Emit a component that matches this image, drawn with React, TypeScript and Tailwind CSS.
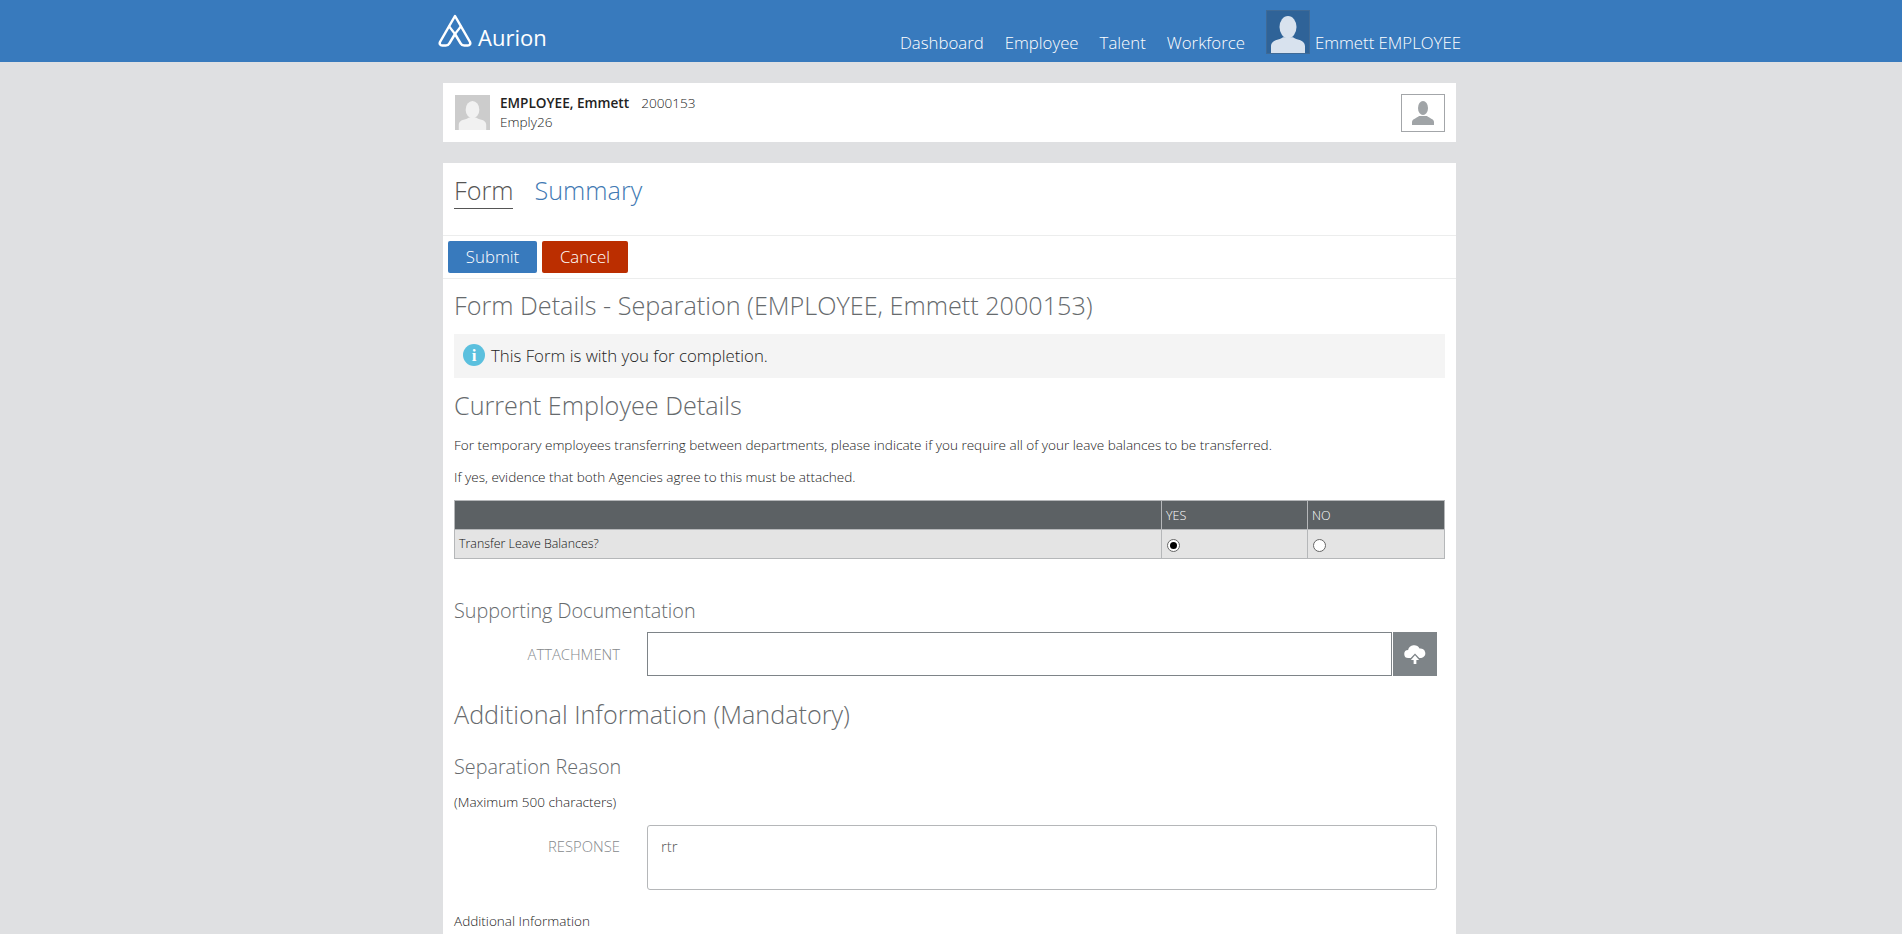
function Silhouette({ className }: { className: string }) {
  return (
    <svg viewBox="0 0 36 40" className={className} fill="currentColor" preserveAspectRatio="none">
      <ellipse cx="18" cy="12" rx="8.500" ry="12" />
      <path d="M1 40v-7c0-5 3-6.500 8-8 2-.6 3-1 4-2h10c1 1 2 1.400 4 2 5 1.500 8 3 8 8v7z" />
    </svg>
  )
}

function Logo() {
  return (
    <div className="flex items-end ml-[-5px]">
      <svg viewBox="0 0 34 33" className="w-[34px] h-[33px]" fill="none" stroke="white" strokeWidth="2.500" strokeLinejoin="round" strokeLinecap="round">
        <path d="M17 2 32 28c.8 1.800-.2 3.600-2.200 3.600h-3.600c-1.600 0-2.800-.8-3.600-2.200L17 20 11.400 29.400c-.8 1.400-2 2.200-3.600 2.200H4.200C2.200 31.600 1.200 29.800 2 28z" />
        <path d="M11.200 12.500 17 20M22.800 12.500 17 20" strokeWidth="2.200" />
      </svg>
      <span className="ml-[6px] mb-[-3px] text-[22px] leading-[26px] text-white font-normal">Aurion</span>
    </div>
  )
}

function FieldLabel({ children }: { children: string }) {
  return <div className="w-[166px] text-right text-[14.800px] font-light text-[#85898c] uppercase">{children}</div>
}

export default function App() {
  return (
    <div className="h-screen overflow-hidden bg-[#dfe0e2] font-['Open_Sans',sans-serif] text-[#222]">
      {/* Top bar */}
      <header className="h-[62px] bg-[#387abd]">
        <div className="w-[1013px] ml-[443px] flex justify-between h-full">
          <div className="pt-[14px]">
            <Logo />
          </div>
          <nav className="flex items-start mr-[-5px] pt-[10px] text-[16.800px] leading-[24px] font-light text-white">
            <a className="mt-[21px] mr-[21px]">Dashboard</a>
            <a className="mt-[21px] mr-[21px]">Employee</a>
            <a className="mt-[21px] mr-[21px]">Talent</a>
            <a className="mt-[21px] mr-[21px]">Workforce</a>
            <div className="w-[44px] h-[44px] bg-[#2f6398] border border-[#3f6a96] flex items-end justify-center">
              <Silhouette className="w-[36px] h-[37px] text-[#d8e2ee]" />
            </div>
            <a className="mt-[21px] ml-[5px]">Emmett EMPLOYEE</a>
          </nav>
        </div>
      </header>

      <main className="w-[1013px] ml-[443px]">
        {/* Employee strip */}
        <section className="mt-[21px] h-[59px] bg-white flex items-center pl-[12px] pr-[11px]">
          <div className="w-[35px] h-[35px] bg-[#cccccc] flex items-end justify-center">
            <Silhouette className="w-[29px] h-[29px] text-[#f1f1f1]" />
          </div>
          <div className="ml-[10px] mt-[-2px] flex-1 text-[13.600px] leading-[19px] font-light">
            <div>
              <span className="font-semibold">EMPLOYEE, Emmett</span>
              <span className="ml-[12px]">2000153</span>
            </div>
            <div>Emply26</div>
          </div>
          <div className="w-[44px] h-[38px] border border-[#a3a6a9] flex items-center justify-center">
            <svg viewBox="0 0 22 24" className="w-[24px] h-[24px] text-[#a0a4a7]" fill="currentColor">
              <ellipse cx="11" cy="7" rx="5" ry="7" />
              <path d="M0 24v-3c0-3 5-4 7-6h8c2 2 7 3 7 6v3z" />
            </svg>
          </div>
        </section>

        {/* Form card */}
        <section className="mt-[21px] bg-white h-[800px]">
          <div className="h-[73px] border-b border-[#eceded] pl-[11px] pt-[10px] flex items-start text-[25.200px] leading-[34px] font-light">
            <span className="text-[#555] border-b border-[#555] pb-[1px]">Form</span>
            <span className="ml-[21px] text-[#4179b3]">Summary</span>
          </div>
          <div className="h-[43px] border-b border-[#eceded] pl-[5px] pt-[5px] flex gap-[5px] text-[16.800px] font-light text-white">
            <button className="w-[89px] h-[32px] bg-[#387abd] rounded-[2px]">Submit</button>
            <button className="w-[86px] h-[32px] bg-[#bb2e00] rounded-[2px]">Cancel</button>
          </div>

          <div className="pl-[11px] pr-[11px]">
            <h1 className="mt-[9px] text-[25.200px] leading-[34px] font-light text-[#666a6d]">
              Form Details - Separation (EMPLOYEE, Emmett 2000153)
            </h1>
            <div className="mt-[12px] h-[44px] bg-[#f4f4f4] flex items-center pl-[9px] text-[16.800px] font-light text-[#222]">
              <span className="w-[22px] h-[22px] rounded-full bg-[#5bc0de] flex items-center justify-center mr-[6px] mt-[-2px]">
                <span className="text-white text-[17px] font-bold leading-none font-['Liberation_Serif',serif]">i</span>
              </span>
              This Form is with you for completion.
            </div>

            <h2 className="mt-[10px] text-[25.200px] leading-[34px] font-light text-[#666a6d]">Current Employee Details</h2>
            <p className="mt-[14px] text-[13.560px] leading-[18px] font-light">
              For temporary employees transferring between departments, please indicate if you require all of your leave balances to be transferred.
            </p>
            <p className="mt-[14px] text-[13.560px] leading-[18px] font-light">
              If yes, evidence that both Agencies agree to this must be attached.
            </p>

            {/* Transfer table */}
            <table className="mt-[14px] w-[991px] table-fixed border-collapse text-[12.500px] font-light">
              <colgroup>
                <col className="w-[707px]" />
                <col className="w-[146px]" />
                <col />
              </colgroup>
              <thead>
                <tr className="h-[29px] bg-[#5c6164] text-white text-left">
                  <th className="border border-[#b5b7b9] font-light" />
                  <th className="border border-[#b5b7b9] font-light pl-[4px] pt-[2px]">YES</th>
                  <th className="border border-[#b5b7b9] font-light pl-[4px] pt-[2px]">NO</th>
                </tr>
              </thead>
              <tbody>
                <tr className="h-[29px] bg-[#e4e4e4]">
                  <td className="border border-[#b5b7b9] pl-[4px] pt-[1px] font-light text-[12.400px] text-[#111]">Transfer Leave Balances?</td>
                  <td className="border border-[#b5b7b9] pl-[5px] pt-[2px]">
                    <span className="w-[13px] h-[13px] rounded-full border border-[#666] bg-white flex items-center justify-center">
                      <span className="w-[7px] h-[7px] rounded-full bg-black" />
                    </span>
                  </td>
                  <td className="border border-[#b5b7b9] pl-[5px] pt-[2px]">
                    <span className="block w-[13px] h-[13px] rounded-full border border-[#666] bg-white" />
                  </td>
                </tr>
              </tbody>
            </table>

            <h3 className="mt-[38px] text-[19.800px] leading-[27px] font-light text-[#666a6d]">Supporting Documentation</h3>
            <div className="mt-[8px] flex items-center">
              <FieldLabel>Attachment</FieldLabel>
              <div className="ml-[27px] w-[745px] h-[44px] border border-[#7e8488] bg-white" />
              <div className="ml-[1px] w-[44px] h-[44px] bg-[#7e8488] flex items-center justify-center">
                <svg viewBox="0 0 24 22" className="w-[22px] h-[20px]" fill="white">
                  <path d="M5 15.500a4.500 4.500 0 0 1-.6-9A6.800 6.800 0 0 1 17 5a5.300 5.300 0 0 1 2 10.500h-2.300L12 10.500l-4.700 5z" />
                  <path d="M12 12.500 16.500 17.500h-3V22h-3v-4.500h-3z" />
                </svg>
              </div>
            </div>

            <h2 className="mt-[21px] text-[25.200px] leading-[34px] font-light text-[#666a6d]">Additional Information (Mandatory)</h2>
            <h3 className="mt-[22px] text-[19.800px] leading-[27px] font-light text-[#666a6d]">Separation Reason</h3>
            <p className="mt-[13px] text-[13.560px] leading-[18px] font-light">(Maximum 500 characters)</p>
            <div className="mt-[14px] flex items-start">
              <div className="pt-[10px]">
                <FieldLabel>Response</FieldLabel>
              </div>
              <div className="ml-[27px] w-[790px] h-[65px] border border-[#b5b7b9] rounded-[3px] pl-[13px] pt-[9px] text-[15px] font-light text-[#555]">
                rtr
              </div>
            </div>
            <p className="mt-[22px] text-[13.560px] leading-[18px] font-light">Additional Information</p>
          </div>
        </section>
      </main>
    </div>
  )
}
